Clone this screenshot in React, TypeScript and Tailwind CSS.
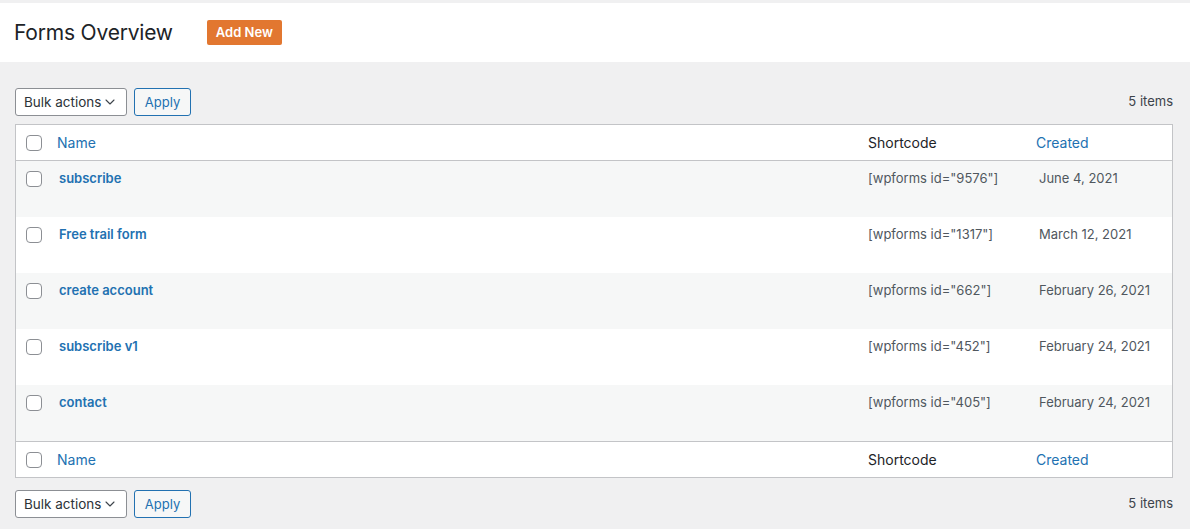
import React from "react";
import { ChevronDown } from "lucide-react";

interface Form {
  id: string;
  name: string;
  created: string;
}

const forms: Form[] = [
  { id: "9576", name: "subscribe", created: "June 4, 2021" },
  { id: "1317", name: "Free trail form", created: "March 12, 2021" },
  { id: "662", name: "create account", created: "February 26, 2021" },
  { id: "452", name: "subscribe v1", created: "February 24, 2021" },
  { id: "405", name: "contact", created: "February 24, 2021" },
];

const Checkbox = () => (
  <span className="block w-4 h-4 rounded-[4px] border border-[#8c8f94] bg-white" />
);

const TableNav = () => (
  <div className="flex items-center h-[28px]">
    <button className="flex items-center whitespace-nowrap w-[112px] h-[28px] pl-2 pr-[8px] rounded-[3px] border border-[#8c8f94] bg-white text-[13.5px] text-[#2c3338]">
      Bulk actions
      <ChevronDown
        size={16}
        strokeWidth={1.6}
        className="ml-auto shrink-0 text-[#3c434a]"
      />
    </button>
    <button className="ml-[7px] w-[57px] h-[28px] pt-[1px] rounded-[3px] border border-[#2271b1] bg-[#f6f7f7] text-[13px] text-[#2271b1]">
      Apply
    </button>
    <span className="ml-auto text-[13px] text-[#3c434a]">5 items</span>
  </div>
);

const HeaderRow = ({ top }: { top?: boolean }) => (
  <div
    className={`flex items-center h-[36px] bg-white ${
      top ? "border-b" : "border-t"
    } border-[#c3c4c7]`}
  >
    <div className="w-[41px] pl-[10px]">
      <Checkbox />
    </div>
    <div className="flex-1 text-[14px] text-[#2271b1]">Name</div>
    <div className="w-[168px] text-[14px] text-[#1d2327]">Shortcode</div>
    <div className="w-[136px] text-[14px] text-[#2271b1]">Created</div>
  </div>
);

export default function App() {
  return (
    <div
      className="w-[1190px] h-[529px] overflow-hidden bg-[#f0f0f1] pt-[3px]"
      style={{ fontFamily: "Inter, 'Liberation Sans', sans-serif" }}
    >
      <div className="flex items-center h-[59px] bg-white pl-[14px]">
        <h1 className="text-[21px] text-[#1d2327] font-normal tracking-[-0.2px]">
          Forms Overview
        </h1>
        <button className="ml-[34px] h-[25px] px-[9px] rounded-[2px] bg-[#e27730] text-white text-[13px] font-semibold">
          Add New
        </button>
      </div>

      <div className="px-[15px] pr-[17px] pt-[26px]">
        <TableNav />

        <div className="mt-[8px] border border-[#c3c4c7] bg-white">
          <HeaderRow top />
          {forms.map((form, i) => (
            <div
              key={form.id}
              className={`flex h-[56px] pt-[8px] ${
                i % 2 === 0 ? "bg-[#f6f7f7]" : "bg-white"
              }`}
            >
              <div className="w-[43px] pl-[10px] pt-[2px]">
                <Checkbox />
              </div>
              <div className="flex-1 text-[13px] font-semibold text-[#2271b1]">
                {form.name}
              </div>
              <div className="w-[171px] text-[13px] text-[#50575e]">
                [wpforms id="{form.id}"]
              </div>
              <div className="w-[133px] text-[13px] text-[#50575e]">
                {form.created}
              </div>
            </div>
          ))}
          <HeaderRow />
        </div>

        <div className="mt-[12px]">
          <TableNav />
        </div>
      </div>
    </div>
  );
}
